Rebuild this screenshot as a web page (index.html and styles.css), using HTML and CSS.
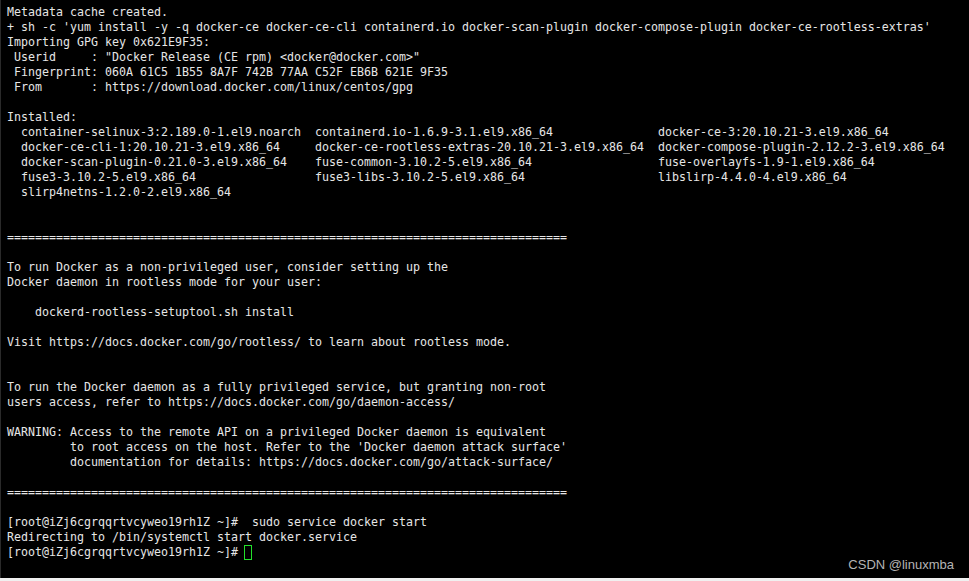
FILE: index.html
```html
<!DOCTYPE html>
<html>
<head>
<meta charset="utf-8">
<link rel="stylesheet" href="styles.css">
</head>
<body>
<div class="screen">
<div class="terminal">
<pre class="output">Metadata cache created.
+ sh -c 'yum install -y -q docker-ce docker-ce-cli containerd.io docker-scan-plugin docker-compose-plugin docker-ce-rootless-extras'
Importing GPG key 0x621E9F35:
 Userid     : "Docker Release (CE rpm) &lt;docker@docker.com&gt;"
 Fingerprint: 060A 61C5 1B55 8A7F 742B 77AA C52F EB6B 621E 9F35
 From       : https://download.docker.com/linux/centos/gpg

Installed:
  container-selinux-3:2.189.0-1.el9.noarch  containerd.io-1.6.9-3.1.el9.x86_64               docker-ce-3:20.10.21-3.el9.x86_64
  docker-ce-cli-1:20.10.21-3.el9.x86_64     docker-ce-rootless-extras-20.10.21-3.el9.x86_64  docker-compose-plugin-2.12.2-3.el9.x86_64
  docker-scan-plugin-0.21.0-3.el9.x86_64    fuse-common-3.10.2-5.el9.x86_64                  fuse-overlayfs-1.9-1.el9.x86_64
  fuse3-3.10.2-5.el9.x86_64                 fuse3-libs-3.10.2-5.el9.x86_64                   libslirp-4.4.0-4.el9.x86_64
  slirp4netns-1.2.0-2.el9.x86_64


================================================================================

To run Docker as a non-privileged user, consider setting up the
Docker daemon in rootless mode for your user:

    dockerd-rootless-setuptool.sh install

Visit https://docs.docker.com/go/rootless/ to learn about rootless mode.


To run the Docker daemon as a fully privileged service, but granting non-root
users access, refer to https://docs.docker.com/go/daemon-access/

WARNING: Access to the remote API on a privileged Docker daemon is equivalent
         to root access on the host. Refer to the 'Docker daemon attack surface'
         documentation for details: https://docs.docker.com/go/attack-surface/

================================================================================

[root@iZj6cgrqqrtvcyweo19rh1Z ~]#  sudo service docker start
Redirecting to /bin/systemctl start docker.service
[root@iZj6cgrqqrtvcyweo19rh1Z ~]# <span class="cursor"> </span></pre>
<div class="watermark">CSDN @linuxmba</div>
</div>
<div class="strip"></div>
</div>
</body>
</html>
```
FILE: styles.css
```css
html, body {
  margin: 0;
  padding: 0;
  background: #000;
}
.screen {
  width: 969px;
  height: 581px;
  display: flex;
  flex-direction: column;
  overflow: hidden;
}
.terminal {
  position: relative;
  height: 578px;
  background: #000;
  border-left: 1px solid #2a2a2a;
  box-sizing: border-box;
}
.output {
  width: fit-content;
  margin: 0;
  padding: 5px 0 0 6px;
  font-family: "DejaVu Sans Mono", monospace;
  font-size: 11.64px;
  line-height: 15px;
  color: #e6e6e6;
  white-space: pre;
}
.cursor {
  display: inline-block;
  width: 6px;
  height: 13px;
  border: 1px solid #22e02a;
  vertical-align: -1px;
  margin-left: -1px;
}
.watermark {
  position: absolute;
  right: 15px;
  bottom: 7px;
  font-family: "Liberation Sans", Arial, sans-serif;
  font-size: 13px;
  line-height: 13px;
  color: #b4b4b4;
}
.strip {
  height: 3px;
  background: #f0f0f0;
}
```
